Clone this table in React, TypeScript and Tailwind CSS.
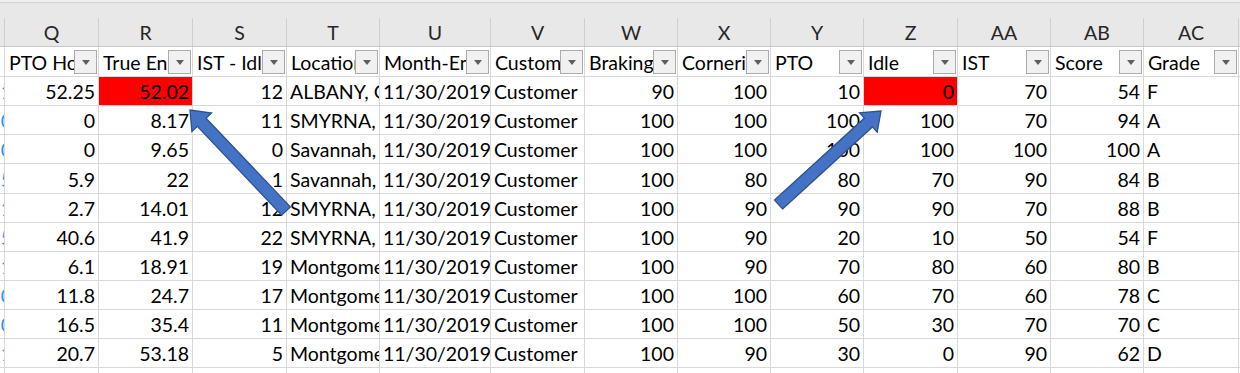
import React from 'react'

type Col = { letter: string; title: string; w: string; num: boolean }

const cols: Col[] = [
  { letter: 'Q', title: 'PTO Hours', w: 'w-[94px]', num: true },
  { letter: 'R', title: 'True Engine Hours', w: 'w-[94px]', num: true },
  { letter: 'S', title: 'IST - Idle', w: 'w-[94px]', num: true },
  { letter: 'T', title: 'Location', w: 'w-[93px]', num: false },
  { letter: 'U', title: 'Month-End', w: 'w-[111px]', num: false },
  { letter: 'V', title: 'Customer', w: 'w-[94px]', num: false },
  { letter: 'W', title: 'Braking', w: 'w-[93px]', num: true },
  { letter: 'X', title: 'Cornering', w: 'w-[93px]', num: true },
  { letter: 'Y', title: 'PTO', w: 'w-[93px]', num: true },
  { letter: 'Z', title: 'Idle', w: 'w-[94px]', num: true },
  { letter: 'AA', title: 'IST', w: 'w-[93px]', num: true },
  { letter: 'AB', title: 'Score', w: 'w-[93px]', num: true },
  { letter: 'AC', title: 'Grade', w: 'w-[95px]', num: false },
]

const rows: string[][] = [
  ['52.25', '52.02', '12', 'ALBANY, GA', '11/30/2019', 'Customer', '90', '100', '10', '0', '70', '54', 'F'],
  ['0', '8.17', '11', 'SMYRNA, GA', '11/30/2019', 'Customer', '100', '100', '100', '100', '70', '94', 'A'],
  ['0', '9.65', '0', 'Savannah, GA', '11/30/2019', 'Customer', '100', '100', '100', '100', '100', '100', 'A'],
  ['5.9', '22', '1', 'Savannah, GA', '11/30/2019', 'Customer', '100', '80', '80', '70', '90', '84', 'B'],
  ['2.7', '14.01', '12', 'SMYRNA, GA', '11/30/2019', 'Customer', '100', '90', '90', '90', '70', '88', 'B'],
  ['40.6', '41.9', '22', 'SMYRNA, GA', '11/30/2019', 'Customer', '100', '90', '20', '10', '50', '54', 'F'],
  ['6.1', '18.91', '19', 'Montgomery, AL', '11/30/2019', 'Customer', '100', '90', '70', '80', '60', '80', 'B'],
  ['11.8', '24.7', '17', 'Montgomery, AL', '11/30/2019', 'Customer', '100', '100', '60', '70', '60', '78', 'C'],
  ['16.5', '35.4', '11', 'Montgomery, AL', '11/30/2019', 'Customer', '100', '100', '50', '30', '70', '70', 'C'],
  ['20.7', '53.18', '5', 'Montgomery, AL', '11/30/2019', 'Customer', '100', '90', '30', '0', '90', '62', 'D'],
  ['', '', '', '', '', '', '', '', '', '', '', '', ''],
]

const leftBits = ['1', '0', '0', '5', '1', '5', '1', '0', '0', '1', '']

function FilterButton() {
  return (
    <div className="mb-[2px] mr-[1px] flex h-[24px] w-[23px] shrink-0 items-center justify-center self-end border border-[#acacac] bg-[#f1f1f1]">
      <div className="h-0 w-0 border-x-[4px] border-t-[5px] border-x-transparent border-t-[#5f5f5f]" />
    </div>
  )
}

function Arrows() {
  return (
    <svg className="pointer-events-none absolute left-0 top-0" width="1240" height="373">
      <polygon
        points="290.4,206.9 206.05,118.2 211.5,113 190,110 191.9,131.6 197.35,126.4 281.65,215.1"
        fill="#4472c4"
        stroke="#2f528f"
        strokeWidth="1.3"
      />
      <polygon
        points="782.5,208.9 872.4,126.9 877.2,132.1 881,111 859.6,112.9 864.4,118.1 774.5,200.1"
        fill="#4472c4"
        stroke="#2f528f"
        strokeWidth="1.3"
      />
    </svg>
  )
}

export default function App() {
  return (
    <div
      className="relative h-[373px] w-[1240px] overflow-hidden bg-white text-[19.5px] text-black"
      style={{ fontFamily: 'Lato, "Liberation Sans", sans-serif' }}
    >
      {/* column letters */}
      <div className="bg-[#e8e8e8]">
        <div className="h-[2px] bg-[#efefef]" />
        <div className="h-px bg-[#d2d2d2]" />
        <div className="h-[15px]" />
        <div className="flex h-[29px] border-b border-[#c6c6c6]">
          <div className="w-[5px] shrink-0 border-r border-[#cfcfcf]" />
          {cols.map((c) => (
            <div
              key={c.letter}
              className={`${c.w} flex shrink-0 items-center justify-center border-r border-[#cfcfcf] pt-[2px] text-[#262626]`}
            >
              {c.letter}
            </div>
          ))}
        </div>
      </div>

      {/* table header with filters */}
      <div className="flex h-[30px] border-b border-[#d9d9d9]">
        <div className="w-[5px] shrink-0 border-r border-[#d9d9d9]" />
        {cols.map((c) => (
          <div
            key={c.letter}
            className={`${c.w} flex shrink-0 border-r border-[#d9d9d9] pl-[4px]`}
          >
            <span className="min-w-0 flex-1 self-end overflow-hidden whitespace-nowrap pb-[3px] leading-[20px]">
              {c.title}
            </span>
            <FilterButton />
          </div>
        ))}
      </div>

      {/* data */}
      {rows.map((r, i) => (
        <div key={i} className="flex h-[29.15px] border-b border-[#d9d9d9]">
          <div className="flex w-[5px] shrink-0 items-end justify-end overflow-hidden border-r border-[#d9d9d9] pb-[3px] text-[#2f8fe8]">
            <span className="mr-[-8px] leading-[20px]">{leftBits[i]}</span>
          </div>
          {cols.map((c, j) => {
            const red = i === 0 && (j === 1 || j === 9)
            return (
              <div
                key={c.letter}
                className={`${c.w} flex shrink-0 items-end overflow-hidden whitespace-nowrap border-r border-[#d9d9d9] pb-[3px] ${
                  c.num ? 'justify-end pr-[3px]' : 'justify-start pl-[3px]'
                } ${red ? 'bg-[#ff0000]' : ''}`}
              >
                <span className="leading-[20px]">{r[j]}</span>
              </div>
            )
          })}
        </div>
      ))}

      <Arrows />
    </div>
  )
}
